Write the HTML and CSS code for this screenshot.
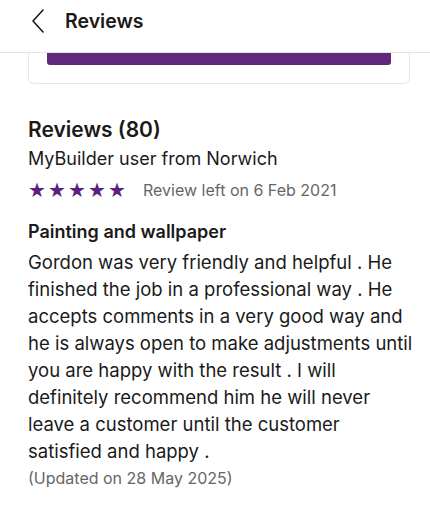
FILE: index.html
```html
<!DOCTYPE html>
<html lang="en">
<head>
    <meta charset="UTF-8">
    <meta name="viewport" content="width=device-width, initial-scale=1.0">
    <title>Reviews | MyBuilder</title>
    <link rel="stylesheet" href="styles.css">
</head>
<body>
    <header class="top-bar">
        <button class="back-btn" aria-label="Back">
            <svg width="14" height="24" viewBox="0 0 14 24">
                <path d="M12 1 L2 12 L12 23" fill="none" stroke="#1a1a1a" stroke-width="1.6" stroke-linecap="round" stroke-linejoin="round"/>
            </svg>
        </button>
        <h1>Reviews</h1>
    </header>

    <div class="card-stub">
        <div class="cta-bar"></div>
    </div>

    <section class="reviews">
        <h2>Reviews (80)</h2>
        <div class="reviewer">MyBuilder user from Norwich</div>
        <div class="rating-row">
            <div class="stars">
                <span>&#9733;</span><span>&#9733;</span><span>&#9733;</span><span>&#9733;</span><span>&#9733;</span>
            </div>
            <span class="review-date">Review left on 6 Feb 2021</span>
        </div>

        <h3>Painting and wallpaper</h3>
        <p class="review-text">Gordon was very friendly and helpful . He finished the job in a professional way . He accepts comments in a very good way and he is always open to make adjustments until you are happy with the result . I will definitely recommend him he will never leave a customer until the customer satisfied and happy .</p>
        <div class="updated">(Updated on 28 May 2025)</div>
    </section>
</body>
</html>
```

FILE: styles.css
```css
:root {
    --purple: #62267a;
    --star: #5a2183;
    --text: #1a1a1a;
    --muted: #666666;
}

body {
    margin: 0;
    font-family: 'Inter', 'Noto Sans', sans-serif;
    color: var(--text);
    background: white;
}

.top-bar {
    display: flex;
    align-items: center;
    height: 52px;
    padding-left: 31px;
    border-bottom: 1px solid #e4e4e4;
    box-sizing: content-box;
}

.back-btn {
    background: none;
    border: none;
    padding: 0;
    display: flex;
    margin-right: 20px;
    margin-top: -10px;
}

.top-bar h1 {
    margin: 0;
    margin-top: -10px;
    font-size: 19.5px;
    font-weight: 600;
}

.card-stub {
    margin: 0 20px 0 28px;
    height: 30px;
    border: 1px solid #e6e6e6;
    border-top: none;
    border-radius: 0 0 6px 6px;
    padding: 0 18px;
}

.cta-bar {
    height: 12px;
    background: var(--purple);
    border-radius: 0 0 3px 3px;
}

.reviews {
    padding: 0 16px 0 28px;
    margin-top: 32px;
}

.reviews h2 {
    margin: 0;
    font-size: 21px;
    font-weight: 600;
    line-height: 28px;
}

.reviewer {
    font-size: 18px;
    line-height: 30px;
}

.rating-row {
    display: flex;
    align-items: center;
    height: 31px;
}

.stars {
    display: flex;
    gap: 3px;
    color: var(--star);
    font-size: 20px;
    margin-right: 18px;
    font-family: 'DejaVu Sans', sans-serif;
}

.stars span {
    width: 17px;
    text-align: center;
}

.review-date {
    font-size: 16px;
    color: var(--muted);
}

.reviews h3 {
    margin: 16px 0 0;
    font-size: 18px;
    font-weight: 600;
    line-height: 22px;
}

.review-text {
    margin: 6px 0 0;
    font-size: 18.5px;
    line-height: 27px;
}

.updated {
    font-size: 16px;
    line-height: 27px;
    color: var(--muted);
}
```
